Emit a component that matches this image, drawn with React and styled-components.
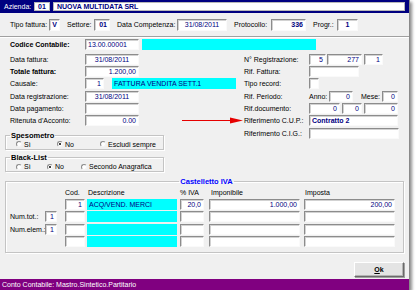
import styled, { createGlobalStyle } from "styled-components";

const GlobalStyle = createGlobalStyle`
  html, body {
    margin: 0;
    padding: 0;
    background: #fff;
  }
  body {
    font-family: "Liberation Sans", Arial, sans-serif;
    font-size: 7px;
    color: #000;
  }
`;

const Window = styled.div`
  width: 409px;
  height: 290px;
  background: #f0f0f0;
  border-right: 1px solid #8a8a8a;
  box-shadow: 2px 2px 3px rgba(0, 0, 0, 0.45);
  display: flex;
  flex-direction: column;
`;

/* navy strip with the company */
const Header = styled.div`
  height: 13px;
  background: #000080;
  display: flex;
  align-items: center;
  padding-left: 4px;
  color: #fff;
`;

const HeaderLabel = styled.span`
  width: 30px;
  flex: none;
`;

const HeaderBox = styled.div`
  box-sizing: border-box;
  height: 9px;
  width: ${(p) => p.$w}px;
  margin-left: ${(p) => p.$ml || 0}px;
  background: #fff;
  border: 1px solid #b8b8b8;
  color: #000080;
  font-weight: bold;
  display: flex;
  align-items: center;
  justify-content: ${(p) => (p.$center ? "center" : "flex-start")};
  padding-left: ${(p) => (p.$center ? 0 : 3)}px;
  white-space: nowrap;
`;

const TopRow = styled.div`
  height: 23px;
  display: flex;
  align-items: center;
  padding-left: 10px;
  border-bottom: 1px solid #a0a0a0;
  box-shadow: 0 1px 0 #fff;
`;

const Label = styled.span`
  width: ${(p) => p.$w}px;
  margin-left: ${(p) => p.$ml || 0}px;
  flex: none;
  white-space: nowrap;
  font-weight: ${(p) => (p.$bold ? "bold" : "normal")};
`;

const Box = styled.div`
  box-sizing: border-box;
  width: ${(p) => p.$w}px;
  height: ${(p) => p.$h || 11}px;
  margin-left: ${(p) => p.$ml || 0}px;
  flex: none;
  display: flex;
  align-items: center;
  justify-content: ${(p) =>
    p.$align === "right" ? "flex-end" : p.$align === "center" ? "center" : "flex-start"};
  padding: 0 2px;
  background: ${(p) => (p.$cyan ? "#00ffff" : "#fff")};
  border: ${(p) => (p.$cyan ? "none" : "1px solid")};
  border-color: #8c8c8c #fafafa #fafafa #8c8c8c;
  box-shadow: ${(p) => (p.$cyan ? "none" : "inset 1px 1px 0 #d2d2d2")};
  color: #000080;
  font-weight: ${(p) => (p.$bold ? "bold" : "normal")};
  white-space: nowrap;
  overflow: hidden;
`;

const Body = styled.div`
  padding: 2px 0 0 5px;
`;

const Row = styled.div`
  display: flex;
  align-items: center;
  height: 11px;
  padding-left: ${(p) => p.$pl || 0}px;
`;

const Columns = styled.div`
  display: flex;
  margin-top: 3.5px;
`;

const LeftCol = styled.div`
  width: 239px;
  flex: none;
  display: flex;
  flex-direction: column;
  gap: 1.4px;
`;

const RightCol = styled.div`
  display: flex;
  flex-direction: column;
  gap: 1.4px;
`;

const Arrow = styled.svg`
  margin-left: 43px;
  flex: none;
`;

const Group = styled.fieldset`
  box-sizing: border-box;
  width: ${(p) => p.$w}px;
  margin: ${(p) => p.$mt || 0}px 0 0 0;
  padding: ${(p) => p.$pad || "0"};
  border: 1px solid #c4c4c4;
  box-shadow: inset 1px 1px 0 #fff, 1px 1px 0 #fff;
  min-width: 0;
`;

const Legend = styled.legend`
  padding: 0 1px;
  margin-left: ${(p) => (p.$center ? "auto" : "4px")};
  margin-right: ${(p) => (p.$center ? "auto" : "0")};
  line-height: 9px;
  font-size: 7.5px;
  font-weight: bold;
  color: ${(p) => (p.$blue ? "#0000ff" : "#000")};
`;

const RadioRow = styled.div`
  display: flex;
  align-items: center;
  height: 9px;
  padding-left: 10px;
`;

const Radio = styled.span`
  display: flex;
  align-items: center;
  gap: 2px;
  width: ${(p) => (p.$w ? `${p.$w}px` : "auto")};
  flex: none;
  white-space: nowrap;
`;

const Dot = styled.span`
  box-sizing: border-box;
  width: 6px;
  height: 6px;
  border-radius: 50%;
  border: 1px solid;
  border-color: #8a8a8a #f4f4f4 #f4f4f4 #8a8a8a;
  background: #fff;
  display: flex;
  align-items: center;
  justify-content: center;
  &::after {
    content: "";
    display: ${(p) => (p.$on ? "block" : "none")};
    width: 2px;
    height: 2px;
    border-radius: 50%;
    background: #000;
  }
`;

const IvaGrid = styled.div`
  display: grid;
  grid-template-columns: 35px 20px 22px 93px 29px 95px 91px;
  grid-auto-rows: 11px;
  row-gap: 1.3px;
  align-items: center;
`;

const Head = styled.span`
  padding-left: ${(p) => p.$pl || 0}px;
  white-space: nowrap;
`;

const Footer = styled.div`
  display: flex;
  justify-content: flex-end;
  padding-right: 5px;
  margin-top: 9px;
`;

const Button = styled.button`
  box-sizing: border-box;
  width: 50px;
  height: 15px;
  padding: 0;
  font-family: inherit;
  font-size: 7px;
  font-weight: bold;
  color: #000;
  background: #e4e4e4;
  border: 1px solid;
  border-color: #fff #6a6a6a #6a6a6a #fff;
  box-shadow: 1px 1px 0 #a0a0a0, inset -1px -1px 0 #b4b4b4;
`;

const StatusBar = styled.div`
  margin-top: auto;
  height: 11px;
  background: #800080;
  color: #fff;
  display: flex;
  align-items: center;
  padding-left: 2px;
  white-space: nowrap;
`;

const ivaRows = [
  { label: "", tot: null, cod: "1", descr: "ACQ/VEND. MERCI", iva: "20,0", imp: "1.000,00", tax: "200,00" },
  { label: "Num.tot.:", tot: "1" },
  { label: "Num.elem.:", tot: "1" },
  { label: "" },
];

const App = () => {
  return (
    <>
      <GlobalStyle />
      <Window>
        <Header>
          <HeaderLabel>Azienda:</HeaderLabel>
          <HeaderBox $w={16} $center>01</HeaderBox>
          <HeaderBox $w={352} $ml={3}>NUOVA MULTIDATA SRL</HeaderBox>
        </Header>

        <TopRow>
          <Label $w={39}>Tipo fattura:</Label>
          <Box $w={11} $h={12} $align="center" $bold>V</Box>
          <Label $w={27} $ml={7}>Settore:</Label>
          <Box $w={16} $h={12} $align="right" $bold>01</Box>
          <Label $w={60} $ml={7}>Data Competenza:</Label>
          <Box $w={50} $h={12} $align="center">31/08/2011</Box>
          <Label $w={37} $ml={7}>Protocollo:</Label>
          <Box $w={35} $h={12} $align="right" $bold>336</Box>
          <Label $w={24} $ml={7}>Progr.:</Label>
          <Box $w={21} $h={12} $align="center" $bold>1</Box>
        </TopRow>

        <Body>
          <Row $pl={5}>
            <Label $w={75} $bold>Codice Contabile:</Label>
            <Box $w={54}>13.00.00001</Box>
            <Box $w={174} $ml={3} $cyan />
          </Row>

          <Columns>
            <LeftCol>
              <Row $pl={5}>
                <Label $w={75}>Data fattura:</Label>
                <Box $w={54} $align="center">31/08/2011</Box>
              </Row>
              <Row $pl={5}>
                <Label $w={75} $bold>Totale fattura:</Label>
                <Box $w={54} $align="right">1.200,00</Box>
              </Row>
              <Row $pl={5}>
                <Label $w={75}>Causale:</Label>
                <Box $w={19} $align="right">1</Box>
                <Box $w={124} $ml={8} $cyan>FATTURA VENDITA SETT.1</Box>
              </Row>
              <Row $pl={5}>
                <Label $w={75}>Data registrazione:</Label>
                <Box $w={54} $align="center">31/08/2011</Box>
              </Row>
              <Row $pl={5}>
                <Label $w={75}>Data pagamento:</Label>
                <Box $w={54} />
              </Row>
              <Row $pl={5}>
                <Label $w={75}>Ritenuta d'Acconto:</Label>
                <Box $w={54} $align="right">0.00</Box>
                <Arrow width="61" height="7" viewBox="0 0 61 7">
                  <line x1="0" y1="3.5" x2="50" y2="3.5" stroke="#e60000" strokeWidth="1" />
                  <polygon points="48,0.5 61,3.5 48,6.5" fill="#e60000" />
                </Arrow>
              </Row>

              <Group $w={159} $mt={3}>
                <Legend>Spesometro</Legend>
                <RadioRow>
                  <Radio $w={41}><Dot />Sì</Radio>
                  <Radio $w={43}><Dot $on />No</Radio>
                  <Radio><Dot />Escludi sempre</Radio>
                </RadioRow>
              </Group>

              <Group $w={159} $mt={2}>
                <Legend>Black-List</Legend>
                <RadioRow>
                  <Radio $w={31}><Dot />Sì</Radio>
                  <Radio $w={34}><Dot $on />No</Radio>
                  <Radio><Dot />Secondo Anagrafica</Radio>
                </RadioRow>
              </Group>
            </LeftCol>

            <RightCol>
              <Row>
                <Label $w={65}>N° Registrazione:</Label>
                <Box $w={17} $align="right">5</Box>
                <Box $w={35} $ml={1} $align="right">277</Box>
                <Box $w={19} $ml={2} $align="right">1</Box>
              </Row>
              <Row>
                <Label $w={65}>Rif. Fattura:</Label>
                <Box $w={50} />
              </Row>
              <Row>
                <Label $w={65}>Tipo record:</Label>
                <Box $w={10} />
              </Row>
              <Row>
                <Label $w={65}>Rif. Periodo:</Label>
                <Label $w={20}>Anno:</Label>
                <Box $w={24} $align="right">0</Box>
                <Label $w={21} $ml={8}>Mese:</Label>
                <Box $w={16} $align="right">0</Box>
              </Row>
              <Row>
                <Label $w={65}>Rif.documento:</Label>
                <Box $w={31} $align="right">0</Box>
                <Box $w={20} $ml={2} $align="right">0</Box>
                <Box $w={34} $ml={2} $align="right">0</Box>
              </Row>
              <Row>
                <Label $w={65}>Riferimento C.U.P.:</Label>
                <Box $w={89} $bold>Contratto 2</Box>
              </Row>
              <Row>
                <Label $w={65}>Riferimento C.I.G.:</Label>
                <Box $w={90} />
              </Row>
            </RightCol>
          </Columns>

          <Group $w={399} $mt={4.5} $pad="1px 0 5.5px 4px">
            <Legend $center $blue>Castelletto IVA</Legend>
            <IvaGrid>
              <span />
              <span />
              <Head>Cod.</Head>
              <Head $pl={1}>Descrizione</Head>
              <Head>% IVA</Head>
              <Head $pl={2}>Imponibile</Head>
              <Head $pl={1}>Imposta</Head>
              {ivaRows.map((r, i) => [
                <Head key={`l${i}`}>{r.label}</Head>,
                r.tot ? (
                  <Box key={`t${i}`} $w={12} $align="right">{r.tot}</Box>
                ) : (
                  <span key={`t${i}`} />
                ),
                <Box key={`c${i}`} $w={20} $align="right">{r.cod}</Box>,
                <Box key={`d${i}`} $w={90} $cyan>{r.descr}</Box>,
                <Box key={`v${i}`} $w={24} $align="right">{r.iva}</Box>,
                <Box key={`i${i}`} $w={91} $align="right">{r.imp}</Box>,
                <Box key={`x${i}`} $w={91} $align="right">{r.tax}</Box>,
              ])}
            </IvaGrid>
          </Group>
        </Body>

        <Footer>
          <Button><u>O</u>k</Button>
        </Footer>

        <StatusBar>Conto Contabile: Mastro.Sintetico.Partitario</StatusBar>
      </Window>
    </>
  );
};

export default App;
